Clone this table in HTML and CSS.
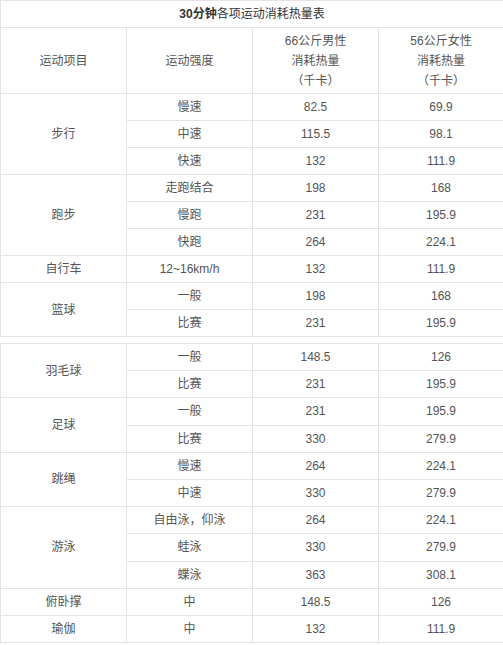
FILE: index.html
```html
<!DOCTYPE html>
<html lang="zh-CN">
<head>
<meta charset="utf-8">
<title>30分钟各项运动消耗热量表</title>
<link rel="stylesheet" href="styles.css">
</head>
<body>
<div class="sheet">
<table class="grid">
  <colgroup><col class="c1"><col class="c2"><col class="c3"><col class="c4"></colgroup>
  <tr class="title-row"><td colspan="4"><b>30分钟</b>各项运动消耗热量表</td></tr>
  <tr class="head-row">
    <td>运动项目</td>
    <td>运动强度</td>
    <td>66公斤男性<br>消耗热量<br>（千卡）</td>
    <td>56公斤女性<br>消耗热量<br>（千卡）</td>
  </tr>
  <tr><td rowspan="3">步行</td><td>慢速</td><td>82.5</td><td>69.9</td></tr>
  <tr><td>中速</td><td>115.5</td><td>98.1</td></tr>
  <tr><td>快速</td><td>132</td><td>111.9</td></tr>
  <tr><td rowspan="3">跑步</td><td>走跑结合</td><td>198</td><td>168</td></tr>
  <tr><td>慢跑</td><td>231</td><td>195.9</td></tr>
  <tr><td>快跑</td><td>264</td><td>224.1</td></tr>
  <tr><td>自行车</td><td>12~16km/h</td><td>132</td><td>111.9</td></tr>
  <tr><td rowspan="2">篮球</td><td>一般</td><td>198</td><td>168</td></tr>
  <tr><td>比赛</td><td>231</td><td>195.9</td></tr>
</table>
<table class="grid second">
  <colgroup><col class="c1"><col class="c2"><col class="c3"><col class="c4"></colgroup>
  <tr><td rowspan="2">羽毛球</td><td>一般</td><td>148.5</td><td>126</td></tr>
  <tr><td>比赛</td><td>231</td><td>195.9</td></tr>
  <tr><td rowspan="2">足球</td><td>一般</td><td>231</td><td>195.9</td></tr>
  <tr><td>比赛</td><td>330</td><td>279.9</td></tr>
  <tr><td rowspan="2">跳绳</td><td>慢速</td><td>264</td><td>224.1</td></tr>
  <tr><td>中速</td><td>330</td><td>279.9</td></tr>
  <tr><td rowspan="3">游泳</td><td>自由泳，仰泳</td><td>264</td><td>224.1</td></tr>
  <tr><td>蛙泳</td><td>330</td><td>279.9</td></tr>
  <tr><td>蝶泳</td><td>363</td><td>308.1</td></tr>
  <tr><td>俯卧撑</td><td>中</td><td>148.5</td><td>126</td></tr>
  <tr><td>瑜伽</td><td>中</td><td>132</td><td>111.9</td></tr>
</table>
</div>
</body>
</html>
```
FILE: styles.css
```css
html, body {
  margin: 0;
  padding: 0;
  background: #ffffff;
}
.sheet {
  width: 503px;
  font-family: "Liberation Sans", "Noto Sans CJK SC", sans-serif;
  font-size: 12px;
  color: #555555;
}
.grid {
  width: 503px;
  border-collapse: collapse;
  table-layout: fixed;
}
.grid col.c1, .grid col.c2, .grid col.c3 { width: 126px; }
.grid col.c4 { width: 125px; }
.grid td {
  border: 1px solid #e4e4e4;
  text-align: center;
  vertical-align: middle;
  padding: 0;
  height: 26px;
  line-height: 16px;
}
.grid .title-row td {
  color: #333333;
  height: 26px;
}
.grid .title-row b {
  font-weight: bold;
  color: #333333;
}
.grid .head-row td {
  height: 65px;
  line-height: 20px;
}
.second {
  margin-top: 6px;
}
.second td {
  height: 26.2px;
}
```
